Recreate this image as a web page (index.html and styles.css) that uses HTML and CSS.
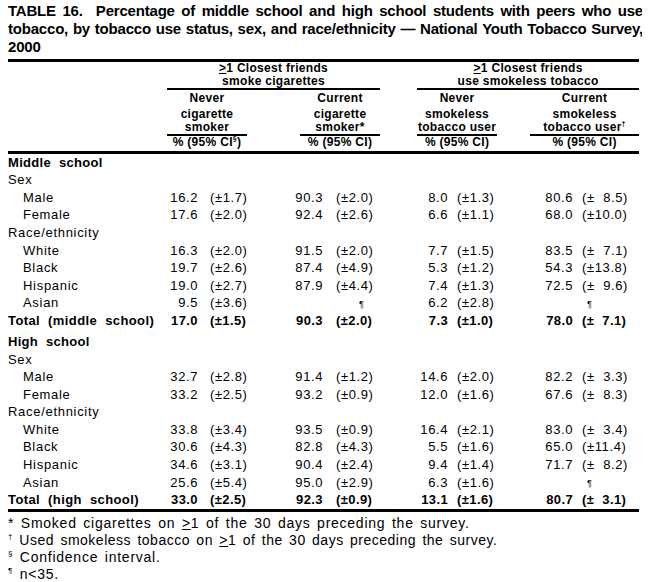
FILE: index.html
```html
<!DOCTYPE html>
<html>
<head>
<meta charset="utf-8">
<link rel="stylesheet" href="styles.css">
</head>
<body>
<div class="title">
  <div class="tl">TABLE 16.&nbsp; Percentage of middle school and high school students with peers who use</div>
  <div class="tl">tobacco, by tobacco use status, sex, and race/ethnicity — National Youth Tobacco Survey,</div>
  <div class="tl last">2000</div>
</div>
<table class="data">
  <colgroup>
    <col class="w-lab"><col class="w-n1"><col class="w-c1"><col class="w-g1">
    <col class="w-n2"><col class="w-c2"><col class="w-g2">
    <col class="w-n3"><col class="w-c3"><col class="w-g3">
    <col class="w-n4"><col class="w-c4">
  </colgroup>
  <thead>
    <tr class="grp">
      <th></th>
      <th colspan="5" class="rule"><u>&gt;</u>1 Closest friends<br>smoke cigarettes</th>
      <th></th>
      <th colspan="5" class="rule"><u>&gt;</u>1 Closest friends<br>use smokeless tobacco</th>
    </tr>
    <tr class="sub">
      <th></th>
      <th colspan="2"><div class="hd"><div class="l1">Never</div><div class="l2">cigarette<br>smoker</div></div></th>
      <th></th>
      <th colspan="2"><div class="hd hd2"><div class="l1">Current</div><div class="l2">cigarette<br>smoker*</div></div></th>
      <th></th>
      <th colspan="2"><div class="hd"><div class="l1">Never</div><div class="l2">smokeless<br>tobacco user</div></div></th>
      <th></th>
      <th colspan="2"><div class="hd"><div class="l1">Current</div><div class="l2">smokeless<br>tobacco user<sup>†</sup></div></div></th>
    </tr>
    <tr class="pct">
      <th></th>
      <th colspan="2">% (95% CI<sup>§</sup>)</th>
      <th></th>
      <th colspan="2"><div class="hd2">% (95% CI)</div></th>
      <th></th>
      <th colspan="2">% (95% CI)</th>
      <th></th>
      <th colspan="2">% (95% CI)</th>
    </tr>
  </thead>
  <tbody>
    <tr class="sec"><td class="lab">Middle school</td><td colspan="11"></td></tr>
    <tr><td class="lab">Sex</td><td colspan="11"></td></tr>
    <tr><td class="lab ind">Male</td><td class="n">16.2</td><td class="c c1">(±1.7)</td><td></td><td class="n">90.3</td><td class="c c2">(±2.0)</td><td></td><td class="n">8.0</td><td class="c c3">(±1.3)</td><td></td><td class="n">80.6</td><td class="c c4">(± &nbsp;8.5)</td></tr>
    <tr><td class="lab ind">Female</td><td class="n">17.6</td><td class="c c1">(±2.0)</td><td></td><td class="n">92.4</td><td class="c c2">(±2.6)</td><td></td><td class="n">6.6</td><td class="c c3">(±1.1)</td><td></td><td class="n">68.0</td><td class="c c4">(±10.0)</td></tr>
    <tr><td class="lab">Race/ethnicity</td><td colspan="11"></td></tr>
    <tr><td class="lab ind">White</td><td class="n">16.3</td><td class="c c1">(±2.0)</td><td></td><td class="n">91.5</td><td class="c c2">(±2.0)</td><td></td><td class="n">7.7</td><td class="c c3">(±1.5)</td><td></td><td class="n">83.5</td><td class="c c4">(± &nbsp;7.1)</td></tr>
    <tr><td class="lab ind">Black</td><td class="n">19.7</td><td class="c c1">(±2.6)</td><td></td><td class="n">87.4</td><td class="c c2">(±4.9)</td><td></td><td class="n">5.3</td><td class="c c3">(±1.2)</td><td></td><td class="n">54.3</td><td class="c c4">(±13.8)</td></tr>
    <tr><td class="lab ind">Hispanic</td><td class="n">19.0</td><td class="c c1">(±2.7)</td><td></td><td class="n">87.9</td><td class="c c2">(±4.4)</td><td></td><td class="n">7.4</td><td class="c c3">(±1.3)</td><td></td><td class="n">72.5</td><td class="c c4">(± &nbsp;9.6)</td></tr>
    <tr><td class="lab ind">Asian</td><td class="n">9.5</td><td class="c c1">(±3.6)</td><td></td><td class="n"></td><td class="c c2"><span class="pil pil2">¶</span></td><td></td><td class="n">6.2</td><td class="c c3">(±2.8)</td><td></td><td class="n"></td><td class="c c4"><span class="pil pil4">¶</span></td></tr>
    <tr class="tot"><td class="lab">Total (middle school)</td><td class="n">17.0</td><td class="c c1">(±1.5)</td><td></td><td class="n">90.3</td><td class="c c2">(±2.0)</td><td></td><td class="n">7.3</td><td class="c c3">(±1.0)</td><td></td><td class="n">78.0</td><td class="c c4">(± &nbsp;7.1)</td></tr>
    <tr class="sec hs"><td class="lab">High school</td><td colspan="11"></td></tr>
    <tr><td class="lab">Sex</td><td colspan="11"></td></tr>
    <tr><td class="lab ind">Male</td><td class="n">32.7</td><td class="c c1">(±2.8)</td><td></td><td class="n">91.4</td><td class="c c2">(±1.2)</td><td></td><td class="n">14.6</td><td class="c c3">(±2.0)</td><td></td><td class="n">82.2</td><td class="c c4">(± &nbsp;3.3)</td></tr>
    <tr><td class="lab ind">Female</td><td class="n">33.2</td><td class="c c1">(±2.5)</td><td></td><td class="n">93.2</td><td class="c c2">(±0.9)</td><td></td><td class="n">12.0</td><td class="c c3">(±1.6)</td><td></td><td class="n">67.6</td><td class="c c4">(± &nbsp;8.3)</td></tr>
    <tr><td class="lab">Race/ethnicity</td><td colspan="11"></td></tr>
    <tr><td class="lab ind">White</td><td class="n">33.8</td><td class="c c1">(±3.4)</td><td></td><td class="n">93.5</td><td class="c c2">(±0.9)</td><td></td><td class="n">16.4</td><td class="c c3">(±2.1)</td><td></td><td class="n">83.0</td><td class="c c4">(± &nbsp;3.4)</td></tr>
    <tr><td class="lab ind">Black</td><td class="n">30.6</td><td class="c c1">(±4.3)</td><td></td><td class="n">82.8</td><td class="c c2">(±4.3)</td><td></td><td class="n">5.5</td><td class="c c3">(±1.6)</td><td></td><td class="n">65.0</td><td class="c c4">(±11.4)</td></tr>
    <tr><td class="lab ind">Hispanic</td><td class="n">34.6</td><td class="c c1">(±3.1)</td><td></td><td class="n">90.4</td><td class="c c2">(±2.4)</td><td></td><td class="n">9.4</td><td class="c c3">(±1.4)</td><td></td><td class="n">71.7</td><td class="c c4">(± &nbsp;8.2)</td></tr>
    <tr><td class="lab ind">Asian</td><td class="n">25.6</td><td class="c c1">(±5.4)</td><td></td><td class="n">95.0</td><td class="c c2">(±2.9)</td><td></td><td class="n">6.3</td><td class="c c3">(±1.6)</td><td></td><td class="n"></td><td class="c c4"><span class="pil pil4">¶</span></td></tr>
    <tr class="tot"><td class="lab">Total (high school)</td><td class="n">33.0</td><td class="c c1">(±2.5)</td><td></td><td class="n">92.3</td><td class="c c2">(±0.9)</td><td></td><td class="n">13.1</td><td class="c c3">(±1.6)</td><td></td><td class="n">80.7</td><td class="c c4">(± &nbsp;3.1)</td></tr>
  </tbody>
</table>
<div class="notes">
  <div>* Smoked cigarettes on <u>&gt;</u>1 of the 30 days preceding the survey.</div>
  <div class="tight"><sup>†</sup> Used smokeless tobacco on <u>&gt;</u>1 of the 30 days preceding the survey.</div>
  <div><sup>§</sup> Confidence interval.</div>
  <div><sup>¶</sup> n&lt;35.</div>
</div>
</body>
</html>
```

FILE: styles.css
```css
html, body {
  background: #fff;
}
body {
  margin: 0 8px;
  padding-top: 2px;
  color: #000;
  font-family: "Liberation Sans", Arial, sans-serif;
}
.title {
  width: 635px;
  font-weight: bold;
  font-size: 15px;
  line-height: 18px;
  letter-spacing: -0.2px;
}
.tl {
  text-align: justify;
  text-align-last: justify;
}
.tl.last {
  text-align-last: left;
}
table.data {
  margin-top: 3px;
  width: 631px;
  table-layout: fixed;
  border-collapse: separate;
  border-spacing: 0;
  border-top: 3px solid #000;
  border-bottom: 3px solid #000;
}
.w-lab { width: 159px; }
.w-n1 { width: 31px; }
.w-c1 { width: 49px; }
.w-g1 { width: 43px; }
.w-n2 { width: 33px; }
.w-c2 { width: 57px; }
.w-g2 { width: 37px; }
.w-n3 { width: 31px; }
.w-c3 { width: 49px; }
.w-g3 { width: 33px; }
.w-n4 { width: 43px; }
.w-c4 { width: 66px; }
th, td {
  padding: 0;
  white-space: nowrap;
}
thead th {
  font-weight: bold;
  font-size: 12px;
  line-height: 13px;
  text-align: center;
  letter-spacing: 0.3px;
  vertical-align: top;
}
th.rule {
  border-bottom: 2px solid #000;
}
.sub th {
  padding-top: 2px;
}
.hd {
  border-bottom: 2px solid #000;
}
.hd2 {
  margin-left: 10px;
}
.sub .l2 {
  margin-top: 3px;
}
.pct th {
  padding-bottom: 2px;
  border-bottom: 3px solid #000;
}
sup {
  font-size: 7px;
  line-height: 0;
  vertical-align: 5px;
}
tbody tr {
  height: 17.55px;
}
tbody td {
  font-size: 13px;
  line-height: 16px;
  letter-spacing: 0.6px;
}
td.lab {
  letter-spacing: 0.7px;
}
td.ind {
  padding-left: 15px;
}
.sec td.lab {
  font-weight: bold;
  word-spacing: 4px;
  letter-spacing: 0.3px;
}
tbody tr.hs {
  height: 21.5px;
}
.hs td {
  vertical-align: bottom;
  padding-bottom: 1px;
}
.tot td {
  font-weight: bold;
  letter-spacing: 0.4px;
}
.tot td.lab {
  word-spacing: 4px;
}
td.n {
  text-align: right;
}
td.c {
  text-align: left;
}
td.c1 { padding-left: 12px; }
td.c2 { padding-left: 13px; }
td.c3 { padding-left: 9px; }
td.c4 { padding-left: 9px; }
.pil {
  font-size: 9px;
}
.pil2 {
  padding-left: 23px;
}
.pil4 {
  padding-left: 5px;
}
.notes {
  margin-top: 3px;
  font-size: 14px;
  line-height: 17px;
  letter-spacing: 0.75px;
  word-spacing: 2px;
}
.notes .tight {
  letter-spacing: 0.5px;
}
.notes sup {
  font-size: 8px;
  vertical-align: 6px;
}
```
